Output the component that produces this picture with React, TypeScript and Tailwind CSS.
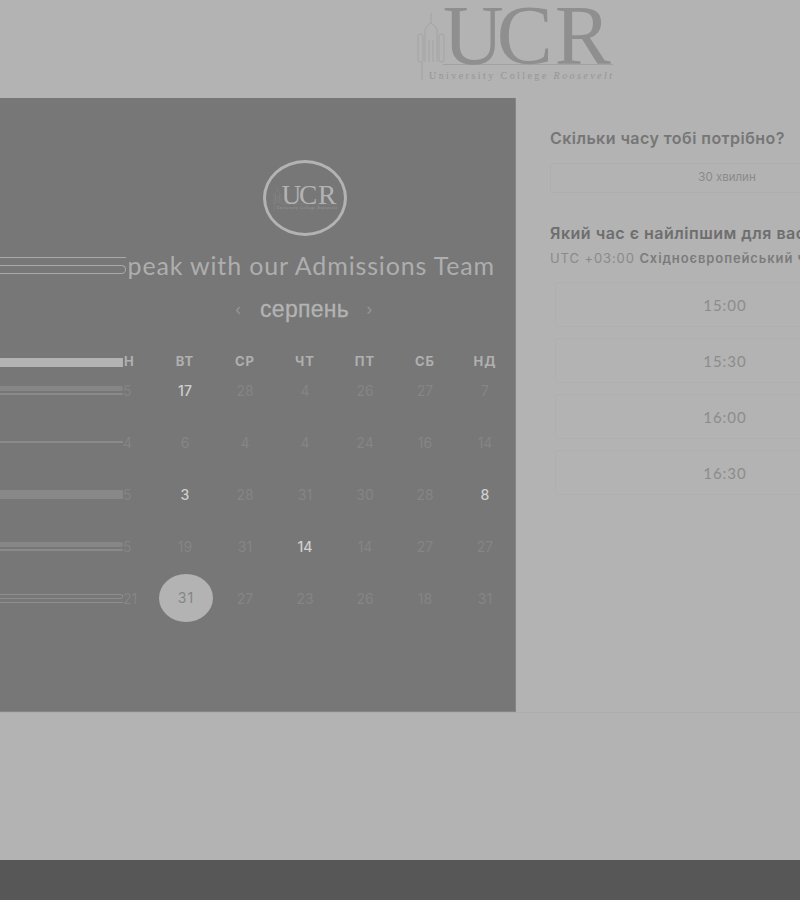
const days = [
  { first: '5', bar: 'double', cells: ['17', '28', '4', '26', '27', '7'] },
  { first: '4', bar: 'thin', cells: ['6', '4', '4', '24', '16', '14'] },
  { first: '5', bar: 'solid', cells: ['3', '28', '31', '30', '28', '8'] },
  { first: '5', bar: 'double', cells: ['19', '31', '14', '14', '27', '27'] },
  { first: '21', bar: 'outline', cells: ['31', '27', '23', '26', '18', '31'] },
];

const heads = ['ВТ', 'СР', 'ЧТ', 'ПТ', 'СБ', 'НД'];
const times = ['15:00', '15:30', '16:00', '16:30'];

// logo is a drawing, the letters stay real text
const Logo = ({ color, className }: { color: string; className: string }) => (
  <svg viewBox="0 0 196 72" className={`overflow-visible ${className}`} fill="none">
    <g stroke={color} strokeWidth="0.7" opacity="0.55">
      <path d="M14 3V13M10 16l4-3 4 3M8 52V20l2-4M20 52V20l-2-4M12 30v22M16 30v22" />
      <rect x="1" y="24" width="5" height="28" rx="2.500" />
      <rect x="22" y="24" width="5" height="28" rx="2.500" />
      <path d="M5 52V70" />
    </g>
    <text x="26" y="54" fill={color} style={{ fontFamily: '"Liberation Serif", serif', fontSize: 84 }}>
      U<tspan dx="-7">C</tspan>
      <tspan dx="2">R</tspan>
    </text>
    <path d="M26 54.500H196" stroke={color} strokeWidth="0.7" opacity="0.7" />
    <text
      x="12"
      y="69"
      fill={color}
      opacity="0.8"
      textLength="183"
      style={{ fontFamily: '"Liberation Serif", serif', fontSize: 10 }}
    >
      University College <tspan fontStyle="italic">Roosevelt</tspan>
    </text>
  </svg>
);

const StretchBar = ({ type }: { type: string }) => {
  if (type === 'solid') return <div className="flex-1 h-[9px] bg-[#888888]" />;
  if (type === 'thin') return <div className="flex-1 h-[2px] bg-[#8a8a8a]" />;
  if (type === 'outline')
    return (
      <div className="flex-1 flex flex-col gap-[3px]">
        <div className="h-[5px] border border-l-0 border-[#8e8e8e] rounded-r-[3px]" />
        <div className="h-[1px] bg-[#8e8e8e]" />
      </div>
    );
  return (
    <div className="flex-1 flex flex-col gap-[2px]">
      <div className="h-[5px] bg-[#868686] rounded-r-[3px]" />
      <div className="h-[2px] bg-[#8a8a8a] rounded-r-[2px]" />
    </div>
  );
};

export default function App() {
  return (
    <div className="w-[800px] h-[900px] overflow-hidden flex flex-col bg-[#b3b3b3] font-['Inter',sans-serif]">
      <header className="h-[98px] shrink-0 flex justify-end pr-[187px] pt-[10px]">
        <Logo color="#8f8f8f" className="w-[196px] h-[72px]" />
      </header>

      <main className="h-[615px] shrink-0 flex border-b border-[#adadad]">
        <section className="w-[516px] shrink-0 bg-[#777777] border-r border-b border-[#858585] flex flex-col">
          <div className="pt-[62px] pl-[263px]">
            <div className="w-[84px] h-[76px] rounded-[50%] border-[3px] border-[#b3b3b3] flex items-center justify-center">
              <Logo color="#b3b3b3" className="w-[64px] h-[24px]" />
            </div>
          </div>

          <div className="mt-[17px] h-[24px] flex items-center pr-[20px]">
            <div className="flex-1 h-[17px] flex flex-col">
              <div className="h-[8px] border-t border-[#aaaaaa]" />
              <div className="h-[9px] border-y border-r border-[#aaaaaa] rounded-r-[5px]" />
            </div>
            <h1 className="ml-[2px] font-['Lato',sans-serif] text-[25px] tracking-[0.85px] leading-[24px] text-[#aeaeae] whitespace-nowrap">
              peak with our Admissions Team
            </h1>
          </div>

          <div className="mt-[20px] h-[24px] flex items-center pl-[235px] text-[#b3b3b3]">
            <span className="text-[#969696] text-[16px] w-[25px]">‹</span>
            <span className="font-['Liberation_Sans',sans-serif] text-[23px] tracking-[0.3px] leading-[24px] [-webkit-text-stroke:0.3px_#b3b3b3]">
              серпень
            </span>
            <span className="text-[#969696] text-[16px] ml-[17px]">›</span>
          </div>

          <div className="mt-[31px] grid grid-cols-[155px_repeat(6,60px)]">
            <div className="h-[20px] flex items-center text-[13px] font-bold text-[#b0b0b0]">
              <div className="w-[123px] h-[9px] bg-[#b3b3b3]" />
              <span className="ml-[1px]">Н</span>
            </div>
            {heads.map((h) => (
              <div key={h} className="h-[20px] flex items-center justify-center text-[13px] font-bold tracking-[1px] text-[#b0b0b0]">
                {h}
              </div>
            ))}
          </div>

          <div className="mt-[-8px] grid grid-cols-[155px_repeat(6,60px)] auto-rows-[52px] text-[14px] text-[#858585]">
            {days.map((row, r) => (
              <div key={r} className="contents">
                <div className="flex items-center">
                  <div className="w-[123px] flex">
                    <StretchBar type={row.bar} />
                  </div>
                  <span className="text-[14px]">{row.first}</span>
                </div>
                {row.cells.map((d, i) => {
                  const selected = r === 4 && i === 0;
                  const on = (r === 0 && i === 0) || (r === 2 && i === 0) || (r === 2 && i === 5) || (r === 3 && i === 2);
                  return (
                    <div key={i} className="flex items-center justify-center">
                      {selected ? (
                        <span className="ml-[2px] w-[54px] h-[48px] rounded-[50%] bg-[#b3b3b3] text-[#858585] flex items-center justify-center pb-[2px] tracking-[1px]">
                          {d}
                        </span>
                      ) : (
                        <span className={on ? 'font-medium text-[#cfcfcf]' : ''}>{d}</span>
                      )}
                    </div>
                  );
                })}
              </div>
            ))}
          </div>
        </section>

        <section className="w-[400px] shrink-0 pl-[34px] pt-[30px]">
          <h2 className="text-[16px] leading-[20px] font-semibold tracking-[0.45px] text-[#767676] whitespace-nowrap">
            Скільки часу тобі потрібно?
          </h2>
          <div className="mt-[15px] w-[354px] h-[30px] border border-[#aeaeae] rounded-[3px] flex items-center justify-center text-[11.5px] text-[#8a8a8a]">
            30 хвилин
          </div>

          <h2 className="mt-[30px] text-[16px] leading-[20px] font-semibold tracking-[0.5px] text-[#6e6e6e] whitespace-nowrap">
            Який час є найліпшим для вас?
          </h2>
          <p className="mt-[5px] text-[13px] leading-[20px] tracking-[0.9px] text-[#8a8a8a] whitespace-nowrap">
            UTC +03:00 <span className="font-semibold text-[#7b7b7b]">Східноєвропейський час</span>
          </p>

          <div className="mt-[14px] ml-[5px] w-[340px] flex flex-col gap-[11px]">
            {times.map((t) => (
              <div
                key={t}
                className="h-[45px] border border-[#afafaf] rounded-[3px] flex items-center justify-center pt-[2px] text-[15px] tracking-[1px] font-['Lato',sans-serif] text-[#8c8c8c]"
              >
                {t}
              </div>
            ))}
          </div>
        </section>
      </main>

      <div className="flex-1" />
      <footer className="h-[40px] shrink-0 bg-[#575757]" />
    </div>
  );
}
